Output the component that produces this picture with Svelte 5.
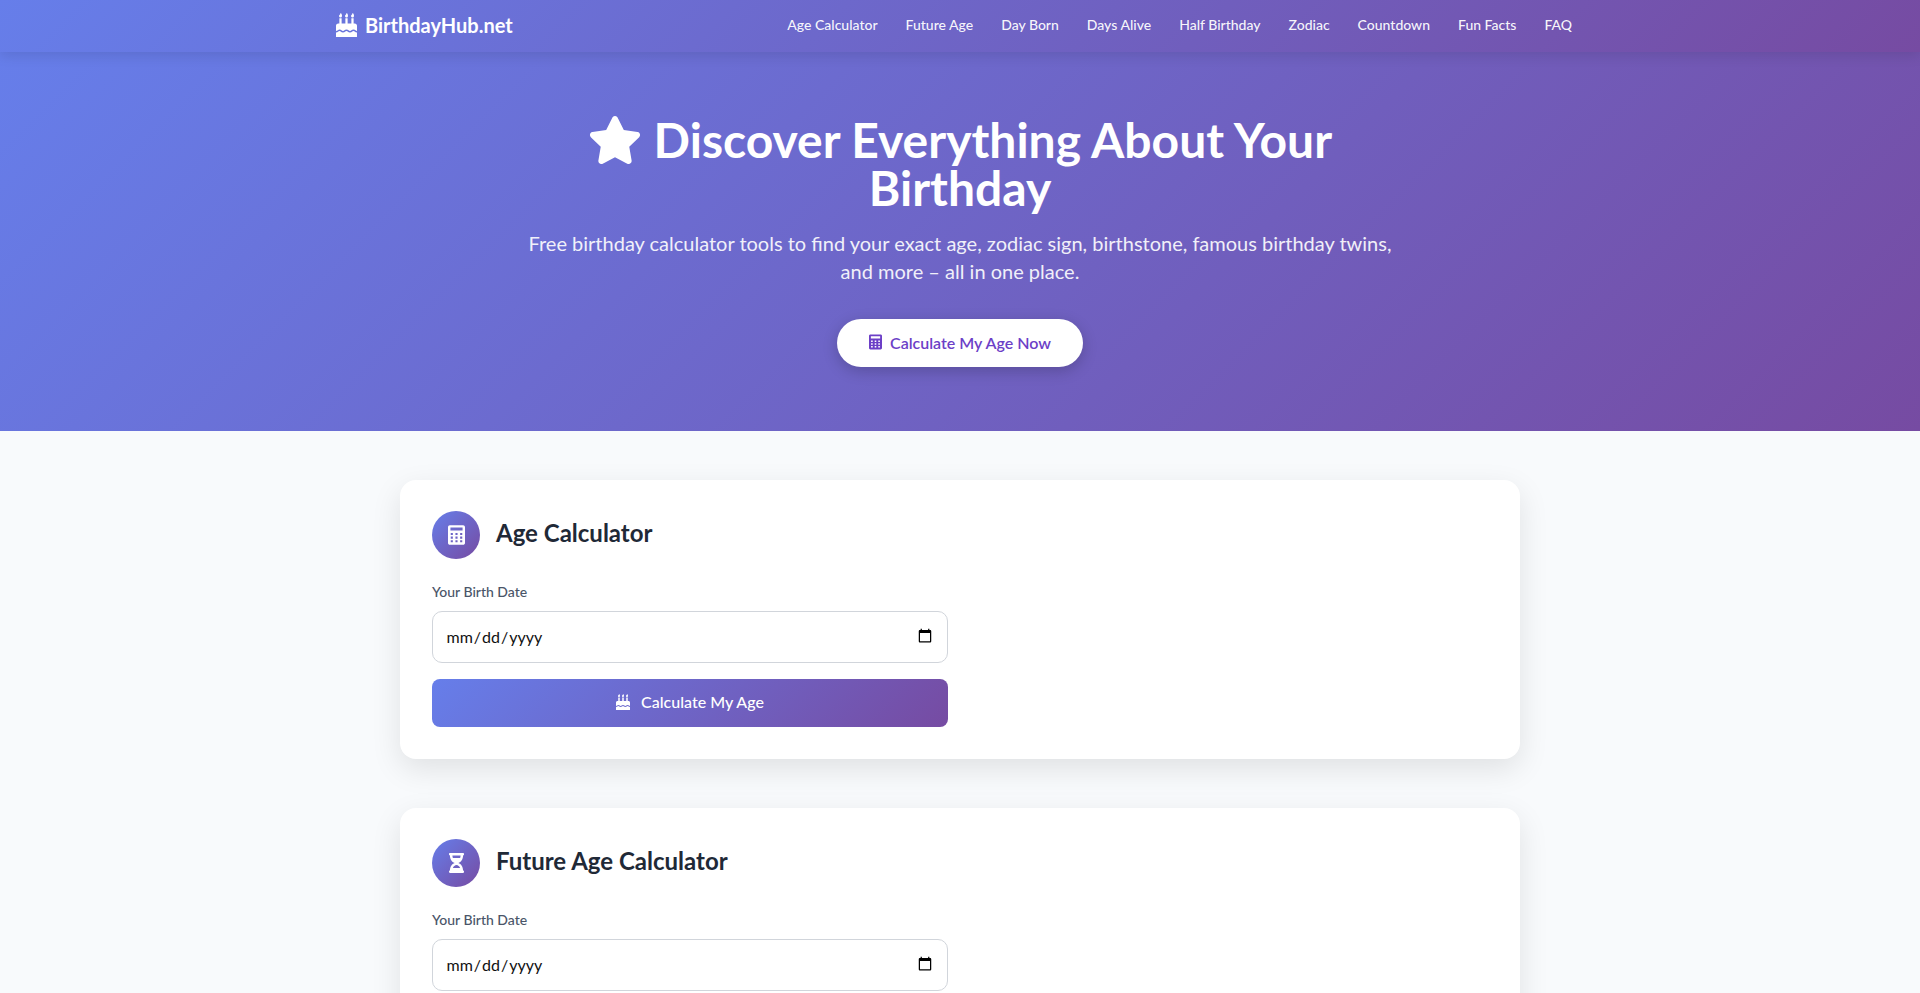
<script>
	const links = ["Age Calculator", "Future Age", "Day Born", "Days Alive", "Half Birthday", "Zodiac", "Countdown", "Fun Facts", "FAQ"];
	const cake = "M448 384c-28.02 0-31.26-32-74.5-32-43.43 0-46.83 32-74.75 32-27.7 0-31.45-32-74.75-32-42.84 0-47.22 32-74.5 32-28.15 0-31.2-32-74.5-32C48 352 32.5 384 0 384v-112c0-26.5 21.5-48 48-48h24V112h48v112h80V112h48v112h80V112h48v112h24c26.5 0 48 21.5 48 48v112zm0 128H0v-96c43.36 0 46.77-32 74.5-32 28.16 0 31.2 32 74.5 32 42.84 0 47.22-32 74.5-32 28.14 0 31.2 32 74.75 32 43.36 0 46.77-32 74.75-32 27.7 0 31.2 32 74.5 32v96zM96 96c-17.75 0-32-14.25-32-32 0-31 32-23 32-64 12 0 32 29.5 32 56s-14.25 40-32 40zm128 0c-17.75 0-32-14.25-32-32 0-31 32-23 32-64 12 0 32 29.5 32 56s-14.25 40-32 40zm128 0c-17.75 0-32-14.25-32-32 0-31 32-23 32-64 12 0 32 29.5 32 56s-14.25 40-32 40z";
	const calc = "M400 0H48C22.4 0 0 22.4 0 48v416c0 25.6 22.4 48 48 48h352c25.6 0 48-22.4 48-48V48c0-25.6-22.4-48-48-48zM64 56h320v80H64zm8 144h56v56H72zm124 0h56v56h-56zm124 0h56v56h-56zM72 296h56v56H72zm124 0h56v56h-56zm124 0h56v56h-56zM72 392h56v56H72zm124 0h56v56h-56zm124 0h56v56h-56z";
	const hourglass = "M360 0H24C10.745 0 0 10.745 0 24v16c0 13.255 10.745 24 24 24 0 90.965 51.016 167.734 120.842 192C75.016 280.266 24 357.035 24 448c-13.255 0-24 10.745-24 24v16c0 13.255 10.745 24 24 24h336c13.255 0 24-10.745 24-24v-16c0-13.255-10.745-24-24-24 0-90.965-51.016-167.734-120.842-192C308.984 231.734 360 154.965 360 64c13.255 0 24-10.745 24-24V24c0-13.255-10.745-24-24-24zm-75.078 384H99.08c17.059-46.797 52.096-80 92.92-80 40.821 0 75.862 33.196 92.922 80zm.019-256H99.078C91.988 108.548 88 86.748 88 64h208c0 22.805-3.987 44.587-11.059 64z";
	const star = "M259.3 17.8L194 150.2 47.9 171.5c-26.2 3.8-36.7 36.1-17.7 54.6l105.7 103-25 145.5c-4.5 26.3 23.2 46 46.4 33.7L288 439.6l130.7 68.7c23.2 12.2 50.9-7.4 46.4-33.7l-25-145.5 105.7-103c19-18.5 8.5-50.8-17.7-54.6L382 150.2 316.7 17.8c-11.7-23.6-45.6-24.1-57.4 0z";

	const tools = [
		{ title: "Age Calculator", icon: calc, vb: "0 0 448 512", button: "Calculate My Age" },
		{ title: "Future Age Calculator", icon: hourglass, vb: "0 0 384 512", button: "Calculate Future Age" }
	];
</script>

<header>
	<div class="nav-inner">
		<a class="logo" href="#top">
			<svg viewBox="0 0 448 512" class="logo-icon"><path d={cake} /></svg>
			BirthdayHub.net
		</a>
		<nav>
			{#each links as link}
				<a href="#top">{link}</a>
			{/each}
		</nav>
	</div>
</header>

<section class="hero">
	<h1><svg viewBox="0 0 576 512" class="star"><path d={star} /></svg> Discover Everything About Your Birthday</h1>
	<p>Free birthday calculator tools to find your exact age, zodiac sign, birthstone, famous birthday twins, and more – all in one place.</p>
	<a class="cta" href="#top">
		<svg viewBox="0 0 448 512" class="cta-icon"><path d={calc} fill-rule="evenodd" /></svg>
		Calculate My Age Now
	</a>
</section>

<main>
	{#each tools as tool}
		<section class="card">
			<div class="card-head">
				<div class="badge"><svg viewBox={tool.vb}><path d={tool.icon} fill-rule="evenodd" /></svg></div>
				<h2>{tool.title}</h2>
			</div>
			<form>
				<label>
					<span>Your Birth Date</span>
					<input type="date" />
				</label>
				<button type="button">
					<svg viewBox="0 0 448 512"><path d={cake} /></svg>
					{tool.button}
				</button>
			</form>
		</section>
	{/each}
</main>

<style>
	:global(body) {
		background: #f8fafc;
		font-family: Lato, "Open Sans", sans-serif;
		color: #1f2937;
	}

	header {
		position: relative;
		z-index: 2;
		height: 52px;
		background: linear-gradient(135deg, #667eea 0%, #764ba2 100%);
		box-shadow: 0 4px 12px rgba(0, 0, 0, 0.1);
	}

	.nav-inner {
		width: 1250px;
		height: 100%;
		box-sizing: border-box;
		padding: 0 0 3px 1px;
		margin: 0 auto;
		display: flex;
		align-items: center;
		justify-content: space-between;
	}

	.logo {
		display: flex;
		align-items: center;
		gap: 8px;
		color: #fff;
		font-size: 20px;
		font-weight: 700;
		text-decoration: none;
	}

	.logo-icon {
		width: 21px;
		height: 24px;
		fill: #fff;
	}

	nav {
		display: flex;
		gap: 28px;
		padding-right: 13px;
	}

	nav a {
		color: rgba(255, 255, 255, 0.95);
		font-size: 14px;
		font-weight: 500;
		text-decoration: none;
	}

	.hero {
		height: 379px;
		box-sizing: border-box;
		padding-top: 64px;
		background: linear-gradient(135deg, #667eea 0%, #764ba2 100%);
		color: #fff;
		text-align: center;
	}

	h1 {
		width: 800px;
		margin: 0 auto 17px;
		font-size: 48px;
		line-height: 48px;
		font-weight: 700;
	}

	.star {
		width: 54px;
		height: 48px;
		fill: #fff;
		vertical-align: -6px;
	}

	.hero p {
		width: 900px;
		margin: 0 auto 34px;
		font-size: 20px;
		line-height: 28px;
		opacity: 0.9;
	}

	.cta {
		display: inline-flex;
		align-items: center;
		gap: 8px;
		height: 48px;
		box-sizing: border-box;
		padding: 0 32px 2px;
		border-radius: 50px;
		background: #fff;
		color: #6c3fc7;
		font-size: 16px;
		font-weight: 600;
		text-decoration: none;
		box-shadow: 0 4px 15px rgba(0, 0, 0, 0.2);
	}

	.cta-icon {
		width: 13px;
		height: 16px;
		fill: #6c3fc7;
	}

	main {
		width: 1120px;
		margin: 0 auto;
		padding: 49px 0;
		display: flex;
		flex-direction: column;
		gap: 49px;
	}

	.card {
		padding: 31px 32px 32px;
		background: #fff;
		border-radius: 16px;
		box-shadow: 0 10px 30px rgba(0, 0, 0, 0.1);
	}

	.card-head {
		display: flex;
		align-items: center;
		gap: 16px;
		margin-bottom: 24px;
	}

	.badge {
		width: 48px;
		height: 48px;
		border-radius: 50%;
		display: flex;
		align-items: center;
		justify-content: center;
		background: linear-gradient(135deg, #667eea 0%, #764ba2 100%);
	}

	.badge svg {
		width: 17px;
		height: 20px;
		fill: #fff;
	}

	h2 {
		margin: 0;
		padding-bottom: 6px;
		font-size: 24px;
		font-weight: 700;
		color: #1f2937;
	}

	form {
		width: 516px;
	}

	label span {
		display: block;
		margin-bottom: 11px;
		font-size: 14px;
		font-weight: 500;
		color: #4a5568;
	}

	input {
		display: block;
		width: 100%;
		height: 52px;
		box-sizing: border-box;
		padding: 0 12.5px 2px;
		border: 1.5px solid #d1d5db;
		border-radius: 10px;
		background: #fff;
		font-family: inherit;
		font-size: 16px;
		color: #111;
	}

	button {
		display: flex;
		align-items: center;
		justify-content: center;
		gap: 11px;
		width: 100%;
		height: 48px;
		margin-top: 16px;
		padding: 0 0 3px;
		border: 0;
		border-radius: 8px;
		background: linear-gradient(135deg, #667eea 0%, #764ba2 100%);
		color: #fff;
		font-family: inherit;
		font-size: 16px;
		font-weight: 500;
	}

	button svg {
		width: 14px;
		height: 16px;
		fill: #fff;
	}
</style>
